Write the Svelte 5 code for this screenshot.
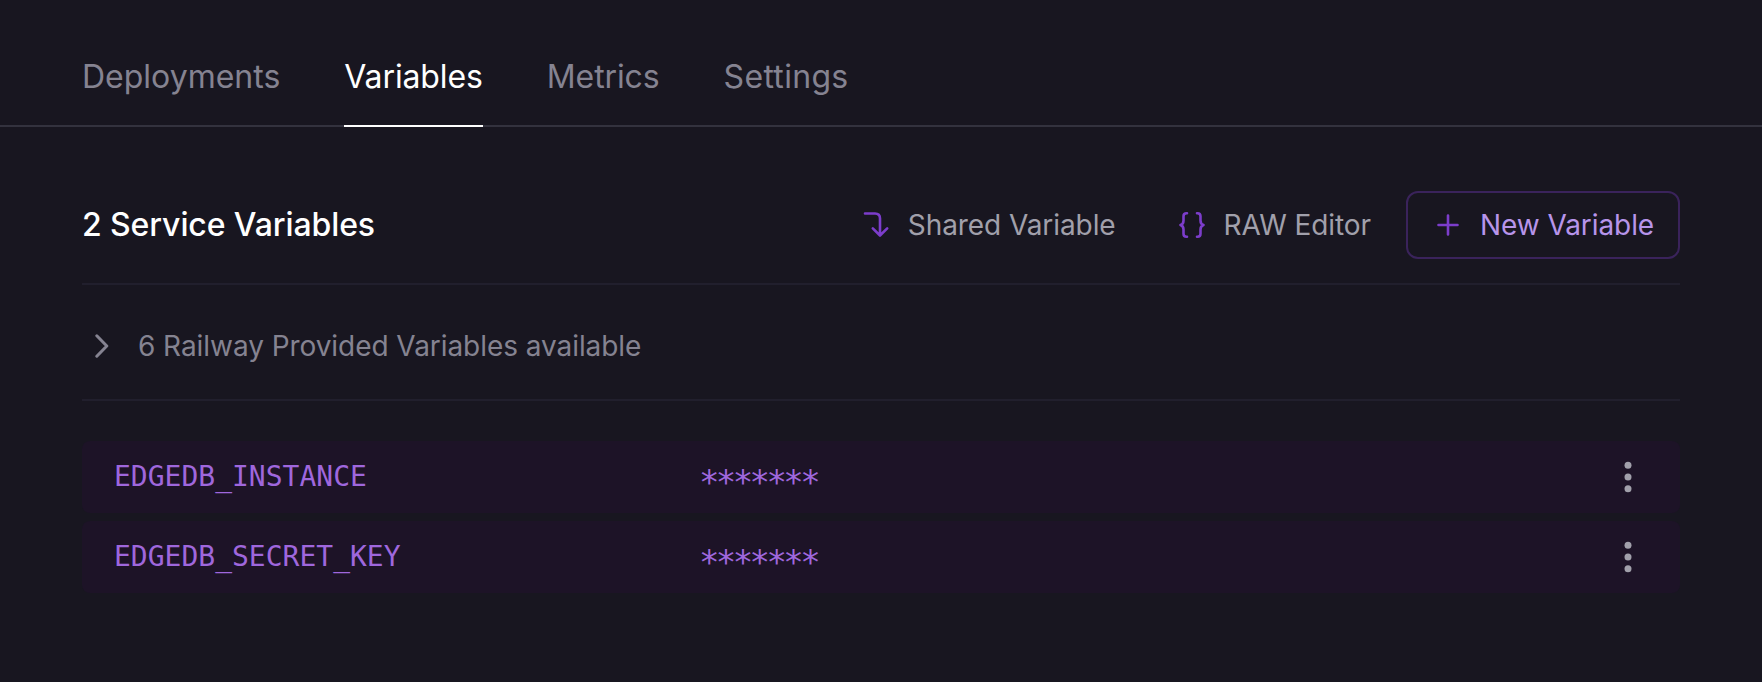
<script>
  const tabs = ['Deployments', 'Variables', 'Metrics', 'Settings'];
  const active = 'Variables';
  const variables = ['EDGEDB_INSTANCE', 'EDGEDB_SECRET_KEY'];
</script>

<div class="panel">
  <nav class="tabs">
    {#each tabs as tab}
      <span class="tab" class:active={tab === active}>{tab}</span>
    {/each}
  </nav>

  <main>
    <header>
      <h2>2 Service Variables</h2>
      <div class="actions">
        <button class="shared">
          <svg width="28" height="28" viewBox="0 0 28 28">
            <path d="M3 2.5H13Q18 2.5 18 7.5V24M10.8 17.3L18 24.5L25.2 17.3" />
          </svg>
          Shared Variable
        </button>
        <button class="raw">
          <svg width="28" height="28" viewBox="0 0 28 28">
            <path d="M9 2.2H8.5Q5.5 2.2 5.5 5.2V9.5Q5.5 13 2.5 14Q5.5 15 5.5 18.5V22.8Q5.5 25.8 8.5 25.8H9M19 2.2H19.5Q22.5 2.2 22.5 5.2V9.5Q22.5 13 25.5 14Q22.5 15 22.5 18.5V22.8Q22.5 25.8 19.5 25.8H19" />
          </svg>
          RAW Editor
        </button>
        <button class="new">
          <svg width="28" height="28" viewBox="0 0 28 28">
            <path d="M14 4.5V23.5M4.5 14H23.5" />
          </svg>
          New Variable
        </button>
      </div>
    </header>

    <div class="provided">
      <svg width="14" height="26" viewBox="0 0 14 26">
        <path d="M1.8 2.8L11.8 13L1.8 23.2" />
      </svg>
      <span>6 Railway Provided Variables available</span>
    </div>

    <div class="list">
      {#each variables as name}
        <div class="row">
          <span class="name">{name}</span>
          <span class="value">*******</span>
          <svg width="8" height="32" viewBox="0 0 8 32">
            <circle cx="4" cy="4.3" r="3.5" />
            <circle cx="4" cy="16" r="3.5" />
            <circle cx="4" cy="27.7" r="3.5" />
          </svg>
        </div>
      {/each}
    </div>
  </main>
</div>

<style>
  :global(body) {
    background: #181620;
  }
  .panel {
    box-sizing: border-box;
    height: 682px;
    overflow: hidden;
    background: #181620;
    font-family: Inter, sans-serif;
    color: #fff;
  }
  .tabs {
    box-sizing: border-box;
    display: flex;
    gap: 64px;
    height: 127px;
    padding: 29px 82px 0;
    border-bottom: 2px solid #33323e;
  }
  .tab {
    box-sizing: border-box;
    height: 98px;
    line-height: 96px;
    font-size: 32px;
    color: #858391;
    white-space: nowrap;
  }
  .tab.active {
    letter-spacing: -0.12px;
    color: #fff;
    border-bottom: 2px solid #fff;
  }
  .tab:nth-child(3) {
    letter-spacing: -0.1px;
  }
  .tab:nth-child(4) {
    letter-spacing: 0.3px;
  }
  main {
    padding: 64px 82px 0;
  }
  header {
    box-sizing: border-box;
    display: flex;
    justify-content: space-between;
    height: 94px;
    border-bottom: 2px solid #211f2d;
  }
  h2 {
    margin: 0;
    font-size: 32px;
    line-height: 68px;
    font-weight: 500;
    letter-spacing: -0.1px;
    white-space: nowrap;
  }
  .actions {
    display: flex;
  }
  button {
    box-sizing: border-box;
    display: flex;
    align-items: center;
    height: 68px;
    margin: 0;
    padding: 0;
    border: 0;
    background: none;
    font: 400 28px/68px Inter, sans-serif;
    letter-spacing: -0.08px;
    color: #a1a0ab;
    white-space: nowrap;
  }
  svg {
    flex: none;
    fill: none;
    stroke: #7c3dcb;
    stroke-width: 2.6;
    stroke-linecap: round;
    stroke-linejoin: round;
  }
  button svg {
    margin-right: 18px;
  }
  .shared {
    margin-right: 62px;
  }
  .raw {
    margin-right: 35px;
  }
  .new {
    width: 274px;
    padding-left: 26px;
    border: 2px solid #3a235b;
    border-radius: 12px;
    color: #b794ea;
  }
  .provided {
    box-sizing: border-box;
    display: flex;
    align-items: center;
    height: 116px;
    padding: 8px 0 0 13px;
    border-bottom: 2px solid #211f2d;
    font-size: 28px;
    letter-spacing: -0.06px;
    color: #858391;
  }
  .provided svg {
    margin-right: 29px;
    stroke: #858391;
    stroke-width: 3;
  }
  .list {
    display: flex;
    flex-direction: column;
    gap: 8px;
    padding-top: 40px;
  }
  .row {
    box-sizing: border-box;
    display: flex;
    align-items: center;
    height: 72px;
    padding: 0 48px 0 32px;
    border-radius: 8px;
    background: #1d1327;
    font: 28px/72px "DejaVu Sans Mono", monospace;
    color: #9f67dd;
  }
  .name {
    width: 585px;
  }
  .value {
    flex: 1;
    padding-top: 11px;
    font-size: 34px;
    line-height: 61px;
    letter-spacing: -3.61px;
  }
  .row svg {
    stroke: none;
    fill: #a1a0ab;
  }
</style>
